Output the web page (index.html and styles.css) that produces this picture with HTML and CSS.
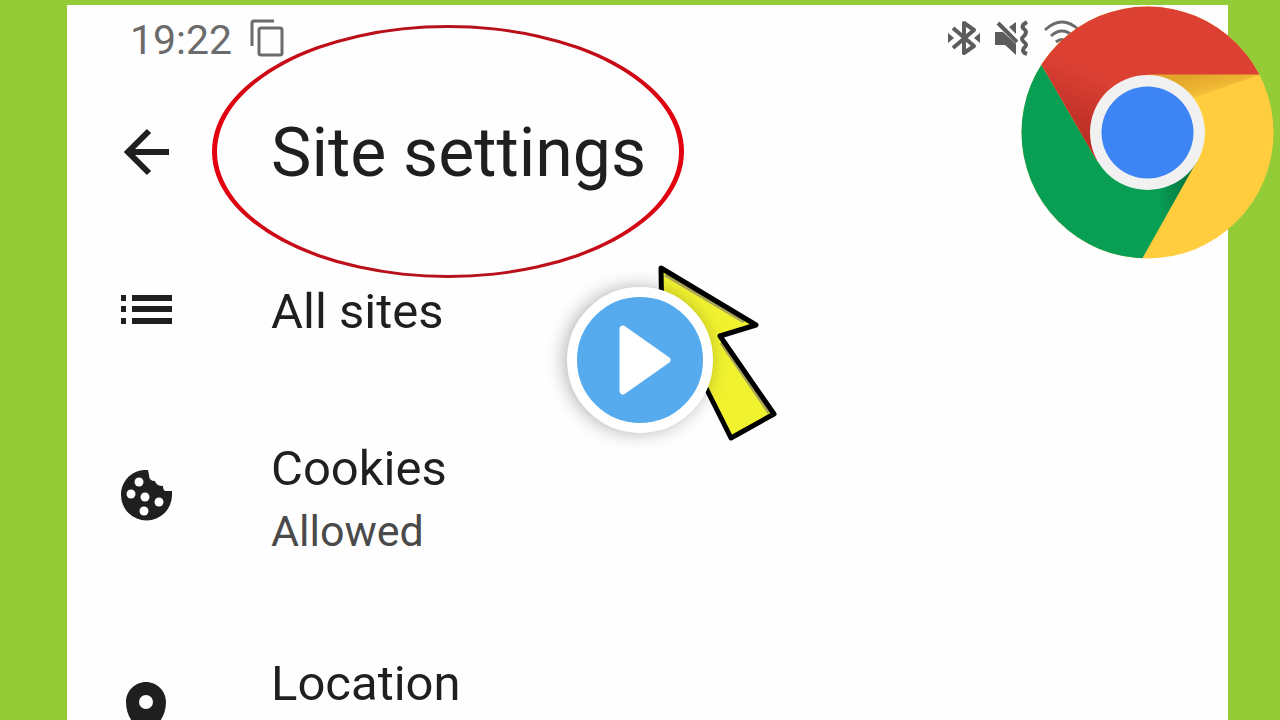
FILE: index.html
```html
<!DOCTYPE html>
<html lang="en">
<head>
    <meta charset="UTF-8">
    <meta name="viewport" content="width=device-width, initial-scale=1.0">
    <title>Site settings</title>
    <link rel="stylesheet" href="styles.css">
</head>
<body>
    <div class="stage">
        <main class="screen">

            <!-- Status bar -->
            <div class="status-bar">
                <span class="clock">19:22</span>
                <svg class="copy-icon" width="34" height="38" viewBox="0 0 34 38" fill="none" stroke="#6b6b6b" stroke-width="3">
                    <path d="M2 27V4q0-2 2-2h20"/>
                    <rect x="9" y="9" width="23" height="27" rx="2"/>
                </svg>
                <div class="status-icons">
                    <svg width="32" height="36" viewBox="0 0 32 36" fill="none" stroke="#5c5c5c" stroke-width="4">
                        <path d="M5 8l21 18-10 7V3l10 7L5 28" stroke-linejoin="round"/>
                        <path d="M0 13l6 5-6 5zM32 13l-6 5 6 5z" fill="#5c5c5c" stroke="none"/>
                    </svg>
                    <svg width="34" height="36" viewBox="0 0 34 36" fill="#5c5c5c">
                        <path d="M0 12h8l13 12v11l-11-10H0zM21 2v12l-7-7z"/>
                        <path d="M3 3l19 19" stroke="#5c5c5c" stroke-width="4"/>
                        <path d="M32 2q-7 4-3 7t0 7q-4 3 0 6t0 6q-3 4 3 6" fill="none" stroke="#5c5c5c" stroke-width="4"/>
                    </svg>
                    <svg width="36" height="36" viewBox="0 0 36 36" fill="none" stroke="#6b6b6b" stroke-width="3">
                        <path d="M1 10q17-16 34 0M7 16q11-10 22 0M12 22q6-5 12 0"/>
                        <circle cx="18" cy="28" r="2"/>
                    </svg>
                </div>
            </div>

            <!-- Title -->
            <header class="title-bar">
                <button type="button" class="back-btn" aria-label="Back">
                    <svg width="52" height="54" viewBox="0 0 52 54" fill="none" stroke="#1f1f1f" stroke-width="6">
                        <path d="M49 26H8M29 5L8 26l21 21"/>
                    </svg>
                </button>
                <h1>Site settings</h1>
            </header>

            <!-- Settings list -->
            <nav class="settings">
                <a class="row" href="#all-sites">
                    <svg width="52" height="34" viewBox="0 0 52 34" fill="#1f1f1f">
                        <path d="M1 0h5v6H1zM12 0h40v6H12zM1 11h5v6H1zM12 11h40v6H12zM1 23h5v6H1zM12 23h40v6H12z"/>
                    </svg>
                    <span class="label">All sites</span>
                </a>
                <a class="row" href="#cookies">
                    <svg width="52" height="56" viewBox="0 0 52 56">
                        <path d="M28 0C12-1 1 11 1 25a25.500 25.500 0 0 0 51 0v-4h-6q-3 0-3-5-7 0-8-5-6 0-6-6z" fill="#1f1f1f"/>
                        <g fill="#fff">
                            <circle cx="19" cy="12" r="4.500"/>
                            <circle cx="11" cy="24" r="4.500"/>
                            <circle cx="25" cy="27" r="4.500"/>
                            <circle cx="39" cy="32" r="4.500"/>
                            <circle cx="24" cy="41" r="4.500"/>
                        </g>
                    </svg>
                    <span class="text">
                        <span class="label">Cookies</span>
                        <span class="value">Allowed</span>
                    </span>
                </a>
                <a class="row row-tall" href="#location">
                    <svg width="52" height="62" viewBox="0 0 52 62">
                        <path d="M26 0C15 0 6 9 6 20c0 15 9 24 20 36 11-12 20-21 20-36C46 9 37 0 26 0zm0 27a7 7 0 1 1 0-14 7 7 0 0 1 0 14z" fill="#1f1f1f"/>
                    </svg>
                    <span class="label">Location</span>
                </a>
            </nav>
        </main>

        <!-- Red ring round the title -->
        <svg class="ring" width="472" height="253" viewBox="0 0 472 253">
            <defs>
                <linearGradient id="ringFill" x1="0" y1="0" x2="0" y2="1">
                    <stop offset="0" stop-color="#b5121c"/>
                    <stop offset="0.35" stop-color="#e3000f"/>
                    <stop offset="0.65" stop-color="#e3000f"/>
                    <stop offset="1" stop-color="#b5121c"/>
                </linearGradient>
            </defs>
            <path fill="url(#ringFill)" fill-rule="evenodd" d="M0 126.500a236 126.500 0 0 1 472 0a236 126.500 0 0 1-472 0zM5 126.500a231 123.500 0 0 0 462 0a231 123.500 0 0 0-462 0z"/>
        </svg>

        <!-- Browser logo -->
        <svg class="logo" width="253" height="253" viewBox="0 0 253 253">
            <defs>
                <clipPath id="disc"><circle cx="126.500" cy="126.500" r="126"/></clipPath>
                <linearGradient id="redShade" gradientUnits="userSpaceOnUse" x1="60" y1="134" x2="84" y2="74">
                    <stop offset="0" stop-color="#b92d24"/>
                    <stop offset="1" stop-color="#db4033"/>
                </linearGradient>
                <linearGradient id="yellowShade" gradientUnits="userSpaceOnUse" x1="176" y1="68" x2="183" y2="96">
                    <stop offset="0" stop-color="#e2a52b"/>
                    <stop offset="0.500" stop-color="#edb432"/>
                    <stop offset="1" stop-color="#ffcd3e"/>
                </linearGradient>
                <linearGradient id="greenShade" gradientUnits="userSpaceOnUse" x1="172" y1="182" x2="136" y2="186">
                    <stop offset="0" stop-color="#06703d"/>
                    <stop offset="1" stop-color="#089f55"/>
                </linearGradient>
            </defs>
            <g clip-path="url(#disc)">
                <path d="M0 0h253v253H0z" fill="#ffcd3e"/>
                <path d="M126 68h115L126 108z" fill="url(#yellowShade)"/>
                <path d="M0 20l20 38 56 97 50 28 50-28-55 98H0z" fill="url(#greenShade)"/>
                <path d="M0 0h253v68.500H127l-51 86.500L20 58z" fill="url(#redShade)"/>
            </g>
            <circle cx="126.500" cy="126.500" r="57.500" fill="#f1f1f1"/>
            <circle cx="126.500" cy="126.500" r="46" fill="#3d84f5"/>
        </svg>

        <!-- Yellow pointer -->
        <svg class="pointer" width="120" height="178" viewBox="0 0 120 178" stroke-linejoin="round">
            <path d="M3 4l95 57-36 11 54 78-43 24L43 114 5 130z" fill="#f0f22f"/>
            <path d="M7 11l79 47M63 79l48 70" fill="none" stroke="#a9a55a" stroke-width="3"/>
            <path d="M3 4l95 57-36 11 54 78-43 24L43 114 5 130z" fill="none" stroke="#000" stroke-width="5"/>
        </svg>

        <button type="button" class="play-btn" aria-label="Play">
            <svg width="52" height="70" viewBox="0 0 52 70">
                <path d="M4 4l44 31L4 66z" fill="#fff" stroke="#fff" stroke-width="7" stroke-linejoin="round"/>
            </svg>
        </button>
    </div>
</body>
</html>
```

FILE: styles.css
```css
* {
    box-sizing: border-box;
}

body {
    margin: 0;
    font-family: Roboto, Arial, sans-serif;
    background-color: #94cc38;
    color: #1f1f1f;
}

.stage {
    position: relative;
    height: 100vh;
    padding: 5px 52px 0 67px;
    overflow: hidden;
}

.screen {
    min-height: 100%;
    padding: 10px 148px 0 53px;
    background-color: #fefefe;
}

/* Status bar */
.status-bar {
    display: flex;
    align-items: center;
    gap: 18px;
    padding-left: 10px;
    font-size: 41px;
    line-height: 50px;
    color: #6b6b6b;
}

.copy-icon {
    margin-bottom: 4px;
}

.status-icons {
    display: flex;
    gap: 15px;
    margin-left: auto;
    margin-bottom: 4px;
}

/* Title */
.title-bar {
    display: flex;
    align-items: center;
    gap: 99px;
    margin-top: 48px;
}

.title-bar h1 {
    margin: 0;
    font-size: 68px;
    font-weight: 400;
    line-height: 80px;
}

.back-btn {
    display: flex;
    padding: 0;
    border: none;
    background: none;
    cursor: pointer;
}

/* Settings list */
.settings {
    display: flex;
    flex-direction: column;
    gap: 99px;
    margin-top: 90px;
}

.row {
    display: flex;
    align-items: center;
    gap: 99px;
    color: #1f1f1f;
    text-decoration: none;
}

.row-tall {
    min-height: 116px;
}

.row-tall .label {
    align-self: flex-start;
}

.text {
    display: flex;
    flex-direction: column;
    gap: 8px;
}

.label {
    font-size: 49px;
    line-height: 58px;
}

.value {
    font-size: 43px;
    line-height: 50px;
    color: #4a4a4a;
}

/* Drawn over the screen */
.ring {
    position: absolute;
    top: 25px;
    left: 212px;
}

.logo {
    position: absolute;
    top: 6px;
    right: 6px;
}

.pointer {
    position: absolute;
    top: 264px;
    left: calc(50% + 18px);
}

.play-btn {
    position: absolute;
    top: 50%;
    left: 50%;
    display: flex;
    align-items: center;
    justify-content: center;
    width: 146px;
    height: 146px;
    padding: 0 0 0 10px;
    border: 10px solid #fff;
    border-radius: 50%;
    background-color: #55abee;
    box-shadow: -3px 0 18px rgba(0, 0, 0, 0.3);
    transform: translate(-50%, -50%);
    cursor: pointer;
}
```
